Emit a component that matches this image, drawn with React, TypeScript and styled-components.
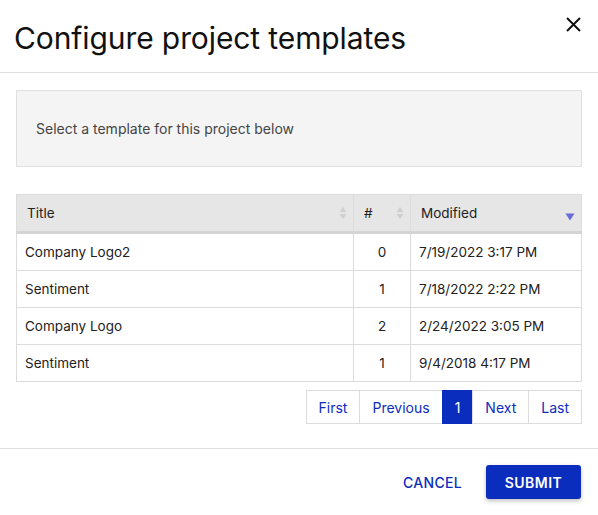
import { createGlobalStyle, styled } from "styled-components";

const GlobalStyle = createGlobalStyle`
  html, body {
    margin: 0;
    padding: 0;
    background: #ffffff;
    font-family: "Inter", "Liberation Sans", sans-serif;
    color: #222;
  }
`;

const BLUE = "#0b2dbd";

const Dialog = styled.div`
  width: 598px;
  height: 515px;
  display: flex;
  flex-direction: column;
  background: #fff;
`;

const Header = styled.div`
  height: 72px;
  display: flex;
  align-items: center;
  justify-content: space-between;
  padding: 0 16px 0 14px;
  border-bottom: 1px solid #e2e2e2;
`;

const Title = styled.h1`
  margin: 4px 0 0 0;
  font-size: 30px;
  font-weight: 400;
  letter-spacing: -0.1px;
  color: #111;
`;

const CloseButton = styled.button`
  border: 0;
  background: none;
  padding: 0;
  width: 18px;
  height: 18px;
  margin-top: -24px;
  display: flex;
  align-items: center;
  justify-content: center;
  cursor: pointer;
`;

const Body = styled.div`
  padding: 17px 16px 0 16px;
  display: flex;
  flex-direction: column;
`;

const InfoBox = styled.div`
  height: 75px;
  background: #f4f4f4;
  border: 1px solid #e0e0e0;
  display: flex;
  align-items: center;
  padding: 0 19px;
  font-size: 14px;
  color: #444;
  margin-bottom: 27px;
`;

const Table = styled.table`
  width: 100%;
  table-layout: fixed;
  border-collapse: collapse;
  font-size: 13.5px;
  color: #222;
`;

const Th = styled.th<{ $w?: number }>`
  box-sizing: border-box;
  height: 38px;
  background: #e6e6e6;
  border: 1px solid #dcdcdc;
  border-bottom: 3px solid #d4d4d4;
  font-weight: 400;
  text-align: left;
  padding: 0 10px;
  position: relative;
  width: ${(p) => (p.$w ? `${p.$w}px` : "auto")};
  font-size: 13.5px;
`;

const Td = styled.td<{ $center?: boolean }>`
  height: 36px;
  border: 1px solid #dcdcdc;
  padding: 0 8px;
  text-align: ${(p) => (p.$center ? "center" : "left")};
`;

const SortIcon = styled.span`
  position: absolute;
  right: 6px;
  top: 50%;
  transform: translateY(-50%);
  display: flex;
`;

const Pager = styled.div`
  display: flex;
  justify-content: flex-end;
  margin-top: 8px;
`;

const PageButton = styled.button<{ $active?: boolean }>`
  height: 34px;
  padding: 0 12px;
  font-family: inherit;
  font-size: 14px;
  color: ${(p) => (p.$active ? "#fff" : BLUE)};
  background: ${(p) => (p.$active ? BLUE : "#fff")};
  border: 1px solid ${(p) => (p.$active ? BLUE : "#dcdcdc")};
  margin-left: -1px;
  cursor: pointer;
`;

const Footer = styled.div`
  margin-top: auto;
  height: 66px;
  border-top: 1px solid #e2e2e2;
  display: flex;
  align-items: center;
  justify-content: flex-end;
  padding: 0 17px 0 0;
  gap: 24px;
`;

const TextButton = styled.button`
  border: 0;
  background: none;
  color: ${BLUE};
  font-family: inherit;
  font-size: 14px;
  font-weight: 500;
  letter-spacing: 0.3px;
  padding: 0;
  cursor: pointer;
`;

const PrimaryButton = styled.button`
  border: 0;
  background: ${BLUE};
  color: #fff;
  font-family: inherit;
  font-size: 14px;
  font-weight: 600;
  letter-spacing: 0.5px;
  height: 34px;
  width: 95px;
  border-radius: 3px;
  box-shadow: 0 2px 4px rgba(0, 0, 0, 0.25);
  cursor: pointer;
`;

const Neutral = () => (
  <svg width="8" height="14" viewBox="0 0 8 14">
    <path d="M4 1 L7.5 6 H0.5 Z" fill="#cfcfcf" />
    <path d="M4 13 L7.5 8 H0.5 Z" fill="#cfcfcf" />
  </svg>
);

const Desc = () => (
  <svg width="10" height="14" viewBox="0 0 10 14" style={{ marginTop: 7 }}>
    <path d="M0.5 4 H9.5 L5 11 Z" fill="#6a6ad8" />
  </svg>
);

const rows = [
  { title: "Company Logo2", count: 0, modified: "7/19/2022 3:17 PM" },
  { title: "Sentiment", count: 1, modified: "7/18/2022 2:22 PM" },
  { title: "Company Logo", count: 2, modified: "2/24/2022 3:05 PM" },
  { title: "Sentiment", count: 1, modified: "9/4/2018 4:17 PM" },
];

export default function App() {
  return (
    <Dialog>
      <GlobalStyle />
      <Header>
        <Title>Configure project templates</Title>
        <CloseButton aria-label="Close">
          <svg width="15" height="15" viewBox="0 0 15 15">
            <path d="M1 1 L14 14 M14 1 L1 14" stroke="#111" strokeWidth="2" />
          </svg>
        </CloseButton>
      </Header>
      <Body>
        <InfoBox>Select a template for this project below</InfoBox>
        <Table>
          <thead>
            <tr>
              <Th>
                Title
                <SortIcon>
                  <Neutral />
                </SortIcon>
              </Th>
              <Th $w={57}>
                #
                <SortIcon>
                  <Neutral />
                </SortIcon>
              </Th>
              <Th $w={171}>
                Modified
                <SortIcon>
                  <Desc />
                </SortIcon>
              </Th>
            </tr>
          </thead>
          <tbody>
            {rows.map((r, i) => (
              <tr key={i}>
                <Td>{r.title}</Td>
                <Td $center>{r.count}</Td>
                <Td>{r.modified}</Td>
              </tr>
            ))}
          </tbody>
        </Table>
        <Pager>
          <PageButton>First</PageButton>
          <PageButton>Previous</PageButton>
          <PageButton $active>1</PageButton>
          <PageButton>Next</PageButton>
          <PageButton>Last</PageButton>
        </Pager>
      </Body>
      <Footer>
        <TextButton>CANCEL</TextButton>
        <PrimaryButton>SUBMIT</PrimaryButton>
      </Footer>
    </Dialog>
  );
}
